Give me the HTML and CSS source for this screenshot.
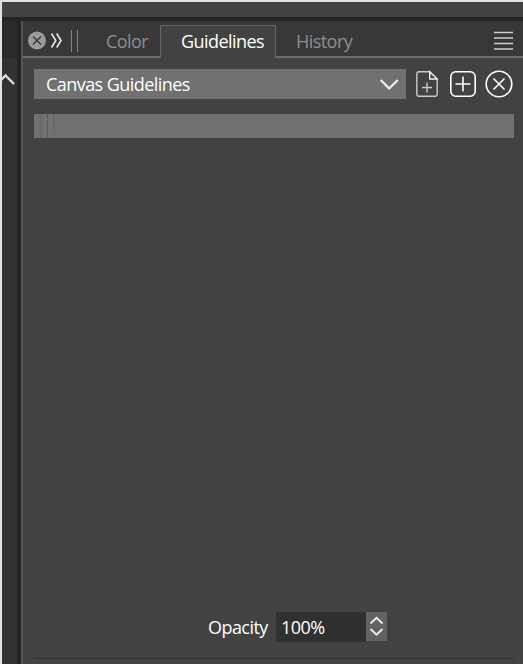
FILE: index.html
```html
<!DOCTYPE html>
<html>
    <head>
        <meta charset="utf-8">
        <title>Guidelines</title>
        <link rel="stylesheet" href="styles.css">
    </head>
    <body>
        <div class="top-bar"></div>
        <div class="workspace">
            <div class="side">
                <div class="side-head"></div>
                <svg class="side-arrow" width="15" height="40" viewBox="0 0 15 40"><path d="M-3 24 L3.5 17.5 L12 26"/></svg>
            </div>
            <div class="panel">
                <div class="tab-bar">
                    <div class="tools">
                        <svg width="56" height="35" viewBox="0 0 56 35">
                            <circle cx="14" cy="19.5" r="9" fill="#9b9b9b"/>
                            <path d="M10 15.5 L18 23.5 M18 15.5 L10 23.5" stroke="#383838" stroke-width="1.5"/>
                            <path d="M28.5 12.5 L32.8 19.5 L28.5 26.5 M33.7 12.5 L38 19.5 L33.7 26.5" fill="none" stroke="#e8e8e8" stroke-width="1.6"/>
                            <path d="M48.5 9 V31 M54.5 9 V31" stroke="#858585"/>
                        </svg>
                    </div>
                    <div class="tab color-tab"><span>Color</span></div>
                    <div class="tab active"><span>Guidelines</span></div>
                    <div class="tab history-tab"><span>History</span></div>
                    <div class="menu">
                        <svg width="19" height="20" viewBox="0 0 19 20"><path d="M0 1.5 H19 M0 7 H19 M0 12.5 H19 M0 18 H19"/></svg>
                    </div>
                </div>
                <div class="toolbar">
                    <div class="dropdown">
                        <span>Canvas Guidelines</span>
                        <svg width="20" height="14" viewBox="0 0 20 14"><path d="M1.7 3 L10.2 11.5 L18.7 3"/></svg>
                    </div>
                    <svg class="icon file-icon" width="22" height="28" viewBox="0 0 22 28">
                        <path d="M14 1.7 H3 Q.8 1.7 .8 4 V24 Q.8 26.2 3 26.2 H19 Q21.2 26.2 21.2 24 V9"/>
                        <path class="bright" d="M13.7 1.7 V9 H21.2 Z"/>
                        <path d="M11 12.5 V22.5 M6 17.5 H16"/>
                    </svg>
                    <svg class="icon add-icon" width="26" height="28" viewBox="0 0 26 28">
                        <rect x=".8" y="1.8" width="24.4" height="24.4" rx="5"/>
                        <path d="M13 6.5 V21.5 M5.5 14 H20.5"/>
                    </svg>
                    <svg class="icon close-icon" width="28" height="28" viewBox="0 0 28 28">
                        <circle cx="14" cy="14" r="12.8"/>
                        <path d="M8.5 8.5 L19.5 19.5 M19.5 8.5 L8.5 19.5"/>
                    </svg>
                </div>
                <div class="list">
                    <svg width="24" height="24" viewBox="0 0 24 24">
                        <path d="M6.5 0 V24" stroke="#666"/>
                        <path d="M13.5 0 V24" stroke="#5c5c5c"/>
                        <path d="M20 0 V24" stroke="#686868" stroke-width="2"/>
                        <path d="M12 5.5 H13 M19 17 H20" stroke="#999"/>
                    </svg>
                </div>
                <div class="opacity">
                    <span class="opacity-label">Opacity</span>
                    <div class="opacity-value"><span>100%</span></div>
                    <svg class="spinner" width="21" height="29" viewBox="0 0 21 29"><path d="M4.5 11.5 L10.5 5.8 L16.5 11.5 M4.5 17 L10.5 22.7 L16.5 17"/></svg>
                </div>
                <div class="divider"></div>
            </div>
        </div>
    </body>
</html>
```
FILE: styles.css
```css
* {
    box-sizing: border-box;
}
body {
    margin: 0;
    height: 664px;
    padding: 2px 0 0 2px;
    background-color: #dce2e7;
    font-family: "Open Sans", "Noto Sans", sans-serif;
    font-size: 18px;
    letter-spacing: -0.55px;
    color: #fff;
    overflow: hidden;
}
svg {
    display: block;
    flex: none;
}
.top-bar {
    height: 19px;
    background-color: #424242;
    border-bottom: 4px solid #242424;
}
.workspace {
    display: flex;
    height: 643px;
}
.side {
    width: 19px;
    background-color: #323232;
    border-right: 4px solid #242424;
}
.side-head {
    height: 37px;
    background-color: #2b2b2b;
}
.side-arrow path {
    fill: none;
    stroke: #dedede;
    stroke-width: 2.4;
}
.panel {
    flex: 1;
    display: flex;
    flex-direction: column;
    background-color: #424242;
    border-left: 2px solid #555;
}
.tab-bar {
    display: flex;
    height: 37px;
    background-color: #383838;
    box-shadow: inset 0 -2px #6a6a6a;
}
.tools {
    width: 64px;
}
.tab {
    color: #8e8e8e;
    line-height: 24px;
    padding-top: 8px;
    white-space: nowrap;
}
.color-tab {
    width: 73px;
    padding-left: 19px;
}
.tab.active {
    width: 116px;
    margin-top: 4px;
    padding: 3px 0 0 20px;
    color: #fff;
    background-color: #424242;
    border: 1px solid #666;
    border-bottom: none;
}
.history-tab {
    width: 86px;
    padding-left: 20px;
}
.menu {
    margin-left: auto;
    padding: 10px 10px 0 0;
}
.menu path {
    stroke: #cecece;
    stroke-width: 1.6;
}
.toolbar {
    display: flex;
    align-items: center;
    height: 30px;
    margin: 11px 9px 0 11px;
}
.dropdown {
    width: 372px;
    height: 30px;
    display: flex;
    align-items: center;
    justify-content: space-between;
    padding: 0 7px 0 12px;
    background-color: #717171;
}
.dropdown path, .spinner path {
    fill: none;
    stroke: #f0f0f0;
    stroke-width: 2.2;
}
.icon {
    fill: none;
    stroke: #fff;
    stroke-width: 1.6;
}
.file-icon {
    margin-left: 10px;
    stroke: #c8c8c8;
    stroke-width: 1.4;
}
.bright {
    stroke: #f0f0f0;
}
.add-icon {
    margin-left: 12px;
}
.close-icon {
    margin-left: 9px;
}
.list {
    height: 24px;
    margin: 15px 9px 0 11px;
    background-color: #717171;
}
.opacity {
    display: flex;
    height: 30px;
    margin-top: auto;
    padding-left: 185px;
    line-height: 31px;
}
.opacity-label {
    width: 68px;
}
.opacity-value {
    width: 90px;
    height: 30px;
    padding-left: 5px;
    background-color: #303030;
}
.spinner {
    background-color: #626262;
}
.spinner path {
    stroke-width: 1.8;
}
.divider {
    height: 1px;
    margin: 16px 9px 5px 11px;
    background-color: #303030;
}
```
